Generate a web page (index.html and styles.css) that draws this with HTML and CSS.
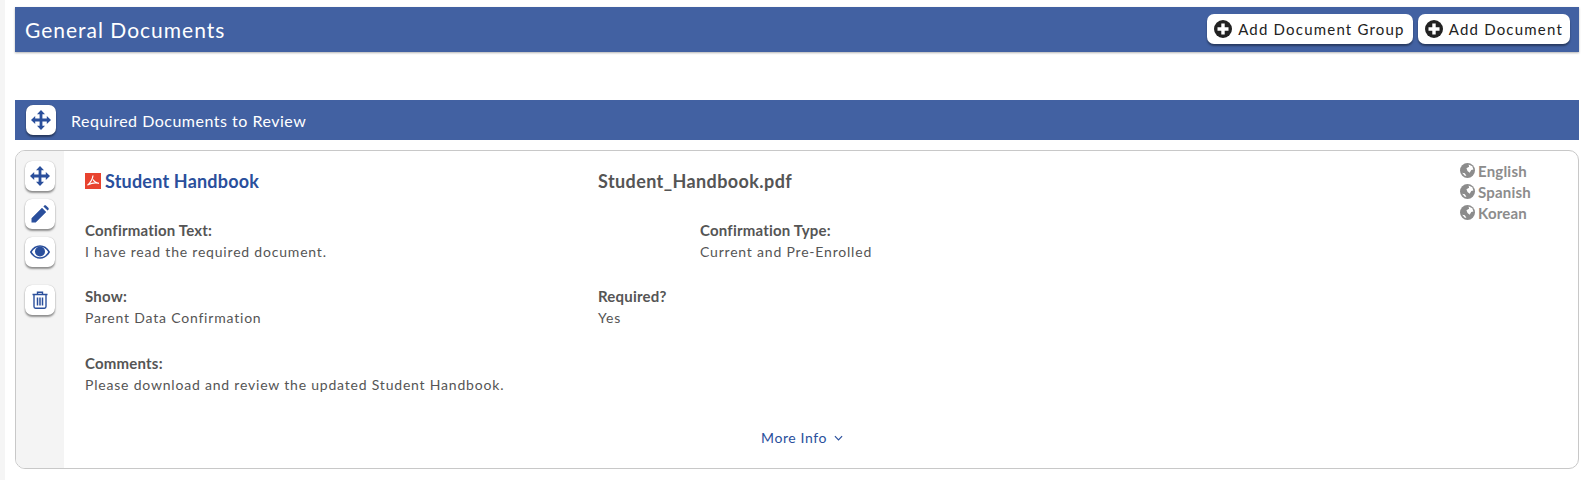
FILE: index.html
```html
<!DOCTYPE html>
<html lang="en">
<head>
    <meta charset="UTF-8">
    <title>General Documents</title>
    <link rel="stylesheet" href="styles.css">
</head>
<body>
    <div class="page">
        <div class="title-bar">
            <h1>General Documents</h1>
            <div class="actions">
                <button class="add-btn"><svg viewBox="0 0 18 18" width="18" height="18"><circle cx="9" cy="9" r="9" fill="#222"/><path d="M7.300 3.500h3.400v3.800h3.800v3.400h-3.800v3.800H7.300v-3.800H3.500V7.300h3.800z" fill="#fff"/></svg>Add Document Group</button>
                <button class="add-btn"><svg viewBox="0 0 18 18" width="18" height="18"><circle cx="9" cy="9" r="9" fill="#222"/><path d="M7.300 3.500h3.400v3.800h3.800v3.400h-3.800v3.800H7.300v-3.800H3.500V7.300h3.800z" fill="#fff"/></svg>Add Document</button>
            </div>
        </div>

        <div class="group-bar">
            <button class="icon-btn"><svg viewBox="0 0 20 20" width="20" height="20"><path class="ico" d="M10 0l4 4.200h-2.600v4.400h4.400V6l4.200 4-4.200 4v-2.600h-4.400v4.400H14L10 20l-4-4.200h2.600v-4.400H4.200V14L0 10l4.200-4v2.600h4.400V4.200H6z"/></svg></button>
            <span>Required Documents to Review</span>
        </div>

        <div class="doc-card">
            <div class="side">
                <button class="icon-btn"><svg viewBox="0 0 20 20" width="20" height="20"><path class="ico" d="M10 0l4 4.200h-2.600v4.400h4.400V6l4.200 4-4.200 4v-2.600h-4.400v4.400H14L10 20l-4-4.200h2.600v-4.400H4.200V14L0 10l4.200-4v2.600h4.400V4.200H6z"/></svg></button>
                <button class="icon-btn"><svg viewBox="0 0 18 18" width="18" height="18"><path class="ico" d="M0.500 13.300L11 2.800l4.200 4.200L4.700 17.500H0.500zM12.400 1.400l.7-.7c.6-.6 1.500-.6 2.100 0l2.100 2.100c.6.6.6 1.500 0 2.100l-.7.7z"/></svg></button>
                <button class="icon-btn"><svg viewBox="0 0 20 14" width="20" height="14"><path d="M0.800 7C3 3.300 6.300 1 10 1s7 2.300 9.200 6C17 10.700 13.700 13 10 13S3 10.700 0.800 7z" fill="none" stroke="#2a4f9c" stroke-width="1.500"/><circle class="ico" cx="10" cy="6.500" r="5"/></svg></button>
                <button class="icon-btn trash"><svg viewBox="0 0 16 18" width="16" height="18"><path d="M5.500 3V1.200h5V3M0.500 3.500h15M2 3.500V15.500c0 1 .6 1.700 1.500 1.700h9c.9 0 1.500-.7 1.500-1.700V3.500" fill="none" stroke="#2a4f9c" stroke-width="1.400"/><path d="M5.500 6.500v8M8 6.500v8M10.500 6.500v8" fill="none" stroke="#2a4f9c" stroke-width="1.500"/></svg></button>
            </div>
            <div class="doc-body">
                <div class="doc-head">
                    <a class="doc-name" href="#"><svg viewBox="0 0 16 16" width="16" height="16"><rect width="16" height="16" fill="#e8432f"/><path d="M8 2.500c-.3 2.800-2 6.500-5.500 9.800M8 6.500c1 2 3.500 3.500 6 3.800M3 11.800c3-1.500 7-2.300 10.500-1.600" fill="none" stroke="#fff" stroke-width="1.200"/></svg>Student Handbook</a>
                    <div class="file-name">Student_Handbook.pdf</div>
                </div>
                <div class="row confirm">
                    <div class="field"><b>Confirmation Text:</b><span>I have read the required document.</span></div>
                    <div class="field"><b>Confirmation Type:</b><span>Current and Pre-Enrolled</span></div>
                </div>
                <div class="row show">
                    <div class="field"><b>Show:</b><span>Parent Data Confirmation</span></div>
                    <div class="field"><b>Required?</b><span>Yes</span></div>
                </div>
                <div class="field"><b>Comments:</b><span>Please download and review the updated Student Handbook.</span></div>
                <a class="more" href="#">More Info <svg viewBox="0 0 10 6" width="9" height="6"><path d="M1 1l4 4 4-4" fill="none" stroke="#2a4f9c" stroke-width="1.300"/></svg></a>
            </div>
            <ul class="langs">
                <li><svg viewBox="0 0 14 14" width="15" height="15"><circle cx="7" cy="7" r="7" fill="#8c8c8c"/><path d="M8 1.500l3.500 1.500 1 3-2 .5-1.500 2.500-2-1.500-1-2.500 2.500-1.500zM2 9l2.500.5L6 12H4.500z" fill="#fff"/></svg>English</li>
                <li><svg viewBox="0 0 14 14" width="15" height="15"><circle cx="7" cy="7" r="7" fill="#8c8c8c"/><path d="M8 1.500l3.500 1.500 1 3-2 .5-1.500 2.500-2-1.500-1-2.500 2.500-1.500zM2 9l2.500.5L6 12H4.500z" fill="#fff"/></svg>Spanish</li>
                <li><svg viewBox="0 0 14 14" width="15" height="15"><circle cx="7" cy="7" r="7" fill="#8c8c8c"/><path d="M8 1.500l3.500 1.500 1 3-2 .5-1.500 2.500-2-1.500-1-2.500 2.500-1.500zM2 9l2.500.5L6 12H4.500z" fill="#fff"/></svg>Korean</li>
            </ul>
        </div>
    </div>
</body>
</html>
```

FILE: styles.css
```css
body {
    margin: 0;
    background-color: #fff;
    font-family: 'Lato', sans-serif;
    font-size: 14px;
    color: #555;
}

.page {
    height: 480px;
    box-sizing: border-box;
    padding: 7px 7px 0 10px;
    border-left: 5px solid #f5f5f5;
}

.title-bar {
    height: 45px;
    box-sizing: border-box;
    display: flex;
    justify-content: space-between;
    align-items: center;
    padding: 0 9px 1px 10px;
    background-color: #4261a2;
    box-shadow: 0 1px 2px rgba(0, 0, 0, 0.3);
}

h1 {
    margin: 0;
    font-size: 21px;
    font-weight: 400;
    letter-spacing: 1px;
    color: #fff;
}

.actions {
    display: flex;
    gap: 5px;
}

.add-btn {
    height: 30px;
    display: flex;
    align-items: center;
    gap: 6px;
    padding: 0 8px 0 7px;
    border: none;
    border-radius: 7px;
    background: #fff;
    font-family: inherit;
    font-size: 15px;
    letter-spacing: 1.200px;
    color: #222;
    box-shadow: 0 2px 2px rgba(0, 0, 0, 0.4);
}

.add-btn:last-child {
    padding-right: 7px;
}

.group-bar {
    margin-top: 48px;
    height: 40px;
    display: flex;
    align-items: center;
    gap: 15px;
    padding-left: 11px;
    background-color: #4261a2;
    color: #fff;
    font-size: 16px;
    letter-spacing: 0.5px;
}

.icon-btn {
    width: 30px;
    height: 30px;
    padding: 0;
    display: flex;
    justify-content: center;
    align-items: center;
    border: none;
    border-radius: 7px;
    background: #fff;
    box-shadow: 0 0 1px rgba(0, 0, 0, 0.3), 0 2px 2px rgba(0, 0, 0, 0.4);
}

.ico {
    fill: #2a4f9c;
}

.doc-card {
    margin-top: 10px;
    height: 319px;
    box-sizing: border-box;
    display: flex;
    border: 1px solid #c8c8c8;
    border-radius: 10px;
    overflow: hidden;
}

.side {
    width: 48px;
    flex-shrink: 0;
    display: flex;
    flex-direction: column;
    align-items: center;
    gap: 8px;
    padding-top: 10px;
    background: #f4f4f4;
    box-sizing: border-box;
}

.trash {
    margin-top: 10px;
}

.doc-body {
    flex: 1;
    padding: 19px 0 0 21px;
}

.doc-head {
    display: flex;
    height: 22px;
    line-height: 22px;
    font-size: 18px;
    font-weight: 700;
    letter-spacing: 0.4px;
}

.doc-name {
    width: 513px;
    display: flex;
    align-items: center;
    gap: 4px;
    letter-spacing: 0.2px;
    color: #2a4f9c;
    text-decoration: none;
}

.row {
    display: flex;
}

.confirm {
    margin-top: 29px;
}

.confirm .field:first-child {
    width: 615px;
}

.show {
    margin-top: 27px;
    margin-bottom: 28px;
}

.show .field:first-child {
    width: 513px;
}

.field b {
    display: block;
    font-size: 15px;
    line-height: 18px;
    letter-spacing: 0.2px;
}

.field span {
    display: block;
    margin-top: 4px;
    line-height: 17px;
    letter-spacing: 0.8px;
}

.more {
    margin: 36px 0 0 676px;
    display: flex;
    align-items: center;
    gap: 7px;
    line-height: 17px;
    letter-spacing: 0.6px;
    color: #2a4f9c;
    text-decoration: none;
}

.langs {
    list-style: none;
    flex-shrink: 0;
    width: 118px;
    box-sizing: border-box;
    margin: 0;
    padding: 9px 0 0;
    font-size: 15px;
    font-weight: 700;
    letter-spacing: 0.2px;
    color: #8c8c8c;
}

.langs li {
    height: 21px;
    display: flex;
    align-items: center;
    gap: 3px;
}
```
